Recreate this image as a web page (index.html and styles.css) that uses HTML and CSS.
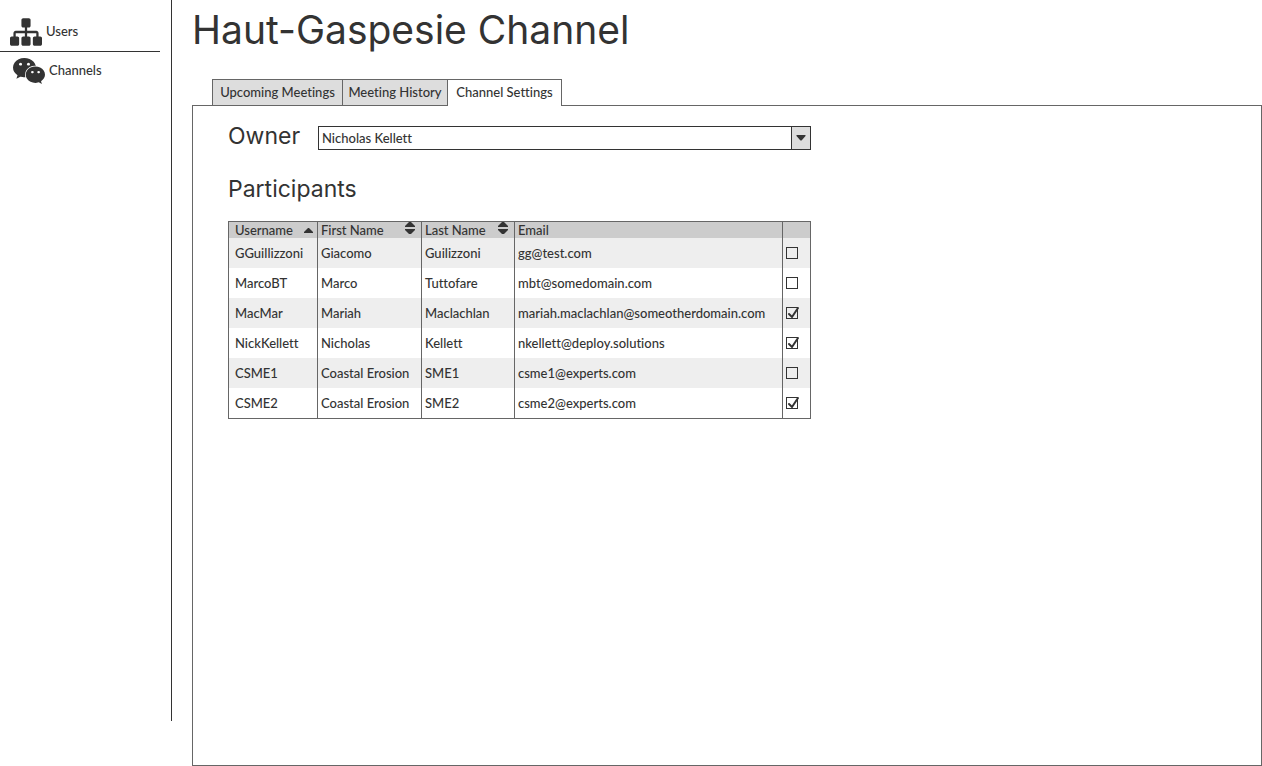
FILE: index.html
```html
<!DOCTYPE html>
<html lang="en">
<head>
<meta charset="utf-8">
<title>Haut-Gaspesie Channel</title>
<link rel="stylesheet" href="styles.css">
</head>
<body>
<div class="app">
  <nav class="sidebar">
    <a class="nav-link nav-users" href="#users">
      <svg class="nav-icon" viewBox="0 0 1792 1792" aria-hidden="true"><path d="M1792 1248v320q0 40-28 68t-68 28h-320q-40 0-68-28t-28-68v-320q0-40 28-68t68-28h96v-192h-512v192h96q40 0 68 28t28 68v320q0 40-28 68t-68 28h-320q-40 0-68-28t-28-68v-320q0-40 28-68t68-28h96v-192h-512v192h96q40 0 68 28t28 68v320q0 40-28 68t-68 28h-320q-40 0-68-28t-28-68v-320q0-40 28-68t68-28h96v-192q0-52 38-90t90-38h512v-192h-96q-40 0-68-28t-28-68v-320q0-40 28-68t68-28h320q40 0 68 28t28 68v320q0 40-28 68t-68 28h-96v192h512q52 0 90 38t38 90v192h96q40 0 68 28t28 68z"/></svg>
      <span>Users</span>
    </a>
    <a class="nav-link nav-channels" href="#channels">
      <svg class="nav-icon" viewBox="0 0 2048 1792" aria-hidden="true"><path d="M580 461q0-41-25-66t-66-25q-43 0-76 25.500t-33 65.500q0 39 33 64.500t76 25.500q41 0 66-24.500t25-65.500zm743 507q0-28-25.500-50t-65.500-22q-27 0-49.500 22.500t-22.500 49.500q0 28 22.500 50.500t49.500 22.500q40 0 65.500-22t25.500-51zm-236-507q0-41-24.500-66t-65.500-25q-43 0-76 25.500t-33 65.500q0 39 33 64.500t76 25.500q41 0 65.500-24.500t24.500-65.500zm635 507q0-28-26-50t-65-22q-27 0-49.500 22.500t-22.500 49.500q0 28 22.500 50.500t49.500 22.500q39 0 65-22t26-51zm-266-397q-31-4-70-4-169 0-311 77t-223.500 208.500-81.500 287.500q0 78 23 152-35 3-68 3-26 0-50-1.500t-55-6.500-44.500-7-54.500-10.500-50-10.500l-253 127 72-218q-290-203-290-490 0-169 97.500-311t264-223.500 363.500-81.500q176 0 332.500 66t262 182.500 136.500 260.500zm592 561q0 117-68.500 223.500t-185.500 193.500l55 181-199-109q-150 37-218 37-169 0-311-70.500t-223.500-191.500-81.500-264 81.500-264 223.500-191.500 311-70.500q161 0 303 70.500t227.500 192 85.500 263.500z"/></svg>
      <span>Channels</span>
    </a>
  </nav>
  <main class="content">
    <h1 class="title">Haut-Gaspesie Channel</h1>
    <div class="tabs" role="tablist">
      <button class="tab tab-upcoming" type="button" role="tab" aria-selected="false">Upcoming Meetings</button>
      <button class="tab tab-history" type="button" role="tab" aria-selected="false">Meeting History</button>
      <button class="tab tab-settings" type="button" role="tab" aria-selected="true">Channel Settings</button>
    </div>
    <section class="panel" role="tabpanel">
      <div class="form">
        <div class="owner">
          <label class="heading" for="owner">Owner</label>
          <div class="picker">
            <select class="picker-select" id="owner"><option>Nicholas Kellett</option></select>
            <span class="picker-button"><svg class="arrow" viewBox="0 0 10 6" aria-hidden="true"><path d="M1 0h8q1 0 .5 1L6 5q-1 1-2 0L.5 1Q0 0 1 0z"/></svg></span>
          </div>
        </div>
        <h2 class="heading">Participants</h2>
        <table class="people">
          <colgroup><col class="col-user"><col class="col-first"><col class="col-last"><col class="col-email"><col class="col-check"></colgroup>
          <thead>
            <tr>
              <th><div class="head"><span>Username</span><svg class="sort-up" viewBox="0 0 9 5" aria-hidden="true"><path d="M4 0h1l4 4v1H0V4z"/></svg></div></th>
              <th><div class="head"><span>First Name</span><svg class="sort" viewBox="0 0 10 12" aria-hidden="true"><path d="M4 0h2l4 4v1H0V4zM0 7h10v1l-4 4H4L0 8z"/></svg></div></th>
              <th><div class="head"><span>Last Name</span><svg class="sort" viewBox="0 0 10 12" aria-hidden="true"><path d="M4 0h2l4 4v1H0V4zM0 7h10v1l-4 4H4L0 8z"/></svg></div></th>
              <th>Email</th>
              <th></th>
            </tr>
          </thead>
          <tbody>
            <tr><td>GGuillizzoni</td><td>Giacomo</td><td>Guilizzoni</td><td>gg@test.com</td><td><label class="check"><input type="checkbox" aria-label="Select GGuillizzoni"><svg class="tick" viewBox="0 0 14 14" aria-hidden="true"><path d="M3 8l3 3 6-9"/></svg></label></td></tr>
            <tr><td>MarcoBT</td><td>Marco</td><td>Tuttofare</td><td>mbt@somedomain.com</td><td><label class="check"><input type="checkbox" aria-label="Select MarcoBT"><svg class="tick" viewBox="0 0 14 14" aria-hidden="true"><path d="M3 8l3 3 6-9"/></svg></label></td></tr>
            <tr><td>MacMar</td><td>Mariah</td><td>Maclachlan</td><td>mariah.maclachlan@someotherdomain.com</td><td><label class="check"><input type="checkbox" aria-label="Select MacMar" checked><svg class="tick" viewBox="0 0 14 14" aria-hidden="true"><path d="M3 8l3 3 6-9"/></svg></label></td></tr>
            <tr><td>NickKellett</td><td>Nicholas</td><td>Kellett</td><td>nkellett@deploy.solutions</td><td><label class="check"><input type="checkbox" aria-label="Select NickKellett" checked><svg class="tick" viewBox="0 0 14 14" aria-hidden="true"><path d="M3 8l3 3 6-9"/></svg></label></td></tr>
            <tr><td>CSME1</td><td>Coastal Erosion</td><td>SME1</td><td>csme1@experts.com</td><td><label class="check"><input type="checkbox" aria-label="Select CSME1"><svg class="tick" viewBox="0 0 14 14" aria-hidden="true"><path d="M3 8l3 3 6-9"/></svg></label></td></tr>
            <tr><td>CSME2</td><td>Coastal Erosion</td><td>SME2</td><td>csme2@experts.com</td><td><label class="check"><input type="checkbox" aria-label="Select CSME2" checked><svg class="tick" viewBox="0 0 14 14" aria-hidden="true"><path d="M3 8l3 3 6-9"/></svg></label></td></tr>
          </tbody>
        </table>
      </div>
    </section>
  </main>
</div>
</body>
</html>
```
FILE: styles.css
```css
* { box-sizing: border-box; }

body {
  margin: 0;
  background: #fff;
  color: #333;
  font: 500 13px/18px Lato, "Noto Sans", sans-serif;
  font-variant-ligatures: none;
}

button, select { font: inherit; font-variant-ligatures: none; color: inherit; }

.app {
  display: grid;
  grid-template-columns: 172px minmax(0, 1fr);
  column-gap: 20px;
  min-height: 100vh;
}

.sidebar {
  margin-bottom: 45px;
  border-right: 1px solid #333;
}

.nav-link {
  display: flex;
  align-items: center;
  gap: 4px;
  margin-right: 11px;
  color: inherit;
  text-decoration: none;
}

.nav-users {
  height: 52px;
  padding: 12px 0 0 10px;
  border-bottom: 1px solid #333;
}

.nav-channels { height: 38px; padding-left: 13px; }
.nav-link span { padding-bottom: 2px; }

.nav-icon { width: 32px; height: 32px; fill: #333; }

.content { display: flex; flex-direction: column; }

.title {
  margin: 0;
  padding: 6px 0 25px;
  font: 400 39px/48px Inter, "Noto Sans", sans-serif;
}

.tabs { display: flex; padding-left: 20px; }

.tab {
  height: 26px;
  padding: 0 0 2px;
  border: 1px solid #666;
  border-bottom: 0;
  background: #ddd;
  white-space: nowrap;
}

.tab + .tab { border-left: 0; }
.tab-upcoming { width: 131px; }
.tab-history { width: 105px; }
.tab-settings { width: 114px; }

.tab[aria-selected="true"] {
  height: 27px;
  margin-bottom: -1px;
  background: #fff;
  z-index: 1;
}

.panel {
  flex: 1;
  padding: 20px 35px;
  border: 1px solid #666;
}

.form { max-width: 583px; }

.owner { display: flex; margin-bottom: 23px; }
.owner .heading { width: 90px; margin-top: -5px; }

.heading {
  margin: 0;
  font: 400 23px/30px Inter, "Noto Sans", sans-serif;
}

.picker {
  display: grid;
  grid-template-columns: minmax(0, 1fr) 20px;
  flex: 1;
  height: 24px;
}

.picker-select {
  grid-area: 1 / 1 / 2 / 3;
  appearance: none;
  padding: 0 24px 1px 3px;
  border: 1px solid #333;
  border-radius: 0;
  background: #fff;
}

.picker-button {
  grid-area: 1 / 2 / 2 / 3;
  display: grid;
  place-items: center;
  border: 1px solid #333;
  background: #ddd;
  pointer-events: none;
}

.arrow { width: 10px; height: 6px; fill: #333; }

.people {
  width: 100%;
  margin-top: 17px;
  table-layout: fixed;
  border-collapse: separate;
  border-spacing: 0;
  border: 1px solid #666;
}

.col-user { width: 89px; }
.col-first { width: 104px; }
.col-last { width: 93px; }
.col-email { width: 268px; }

.people th, .people td {
  padding: 0 0 0 3px;
  border-right: 1px solid #666;
  text-align: left;
  font-weight: 500;
  white-space: nowrap;
}

.people th:last-child, .people td:last-child { border-right: 0; }
.people th:first-child, .people td:first-child { padding-left: 6px; }
.people th { height: 16px; background: #ccc; line-height: 16px; }
.people td { height: 30px; }
.people tbody tr:nth-child(odd) { background: #eee; }

.head {
  display: flex;
  justify-content: space-between;
  align-items: center;
  height: 16px;
  padding-right: 4px;
}

.head svg { fill: #333; }
.people th + th .head { padding-right: 6px; }
.sort-up { width: 9px; height: 5px; }
.sort { width: 10px; height: 12px; margin-bottom: 4px; }

.check { display: grid; width: 14px; height: 14px; }

.check input {
  grid-area: 1 / 1;
  place-self: center start;
  appearance: none;
  width: 12px;
  height: 12px;
  margin: 0;
  border: 1px solid #333;
}

.tick {
  grid-area: 1 / 1;
  width: 14px;
  height: 14px;
  fill: none;
  stroke: #333;
  stroke-width: 2;
  stroke-linecap: round;
  visibility: hidden;
  pointer-events: none;
}

.check input:checked + .tick { visibility: visible; }
```
